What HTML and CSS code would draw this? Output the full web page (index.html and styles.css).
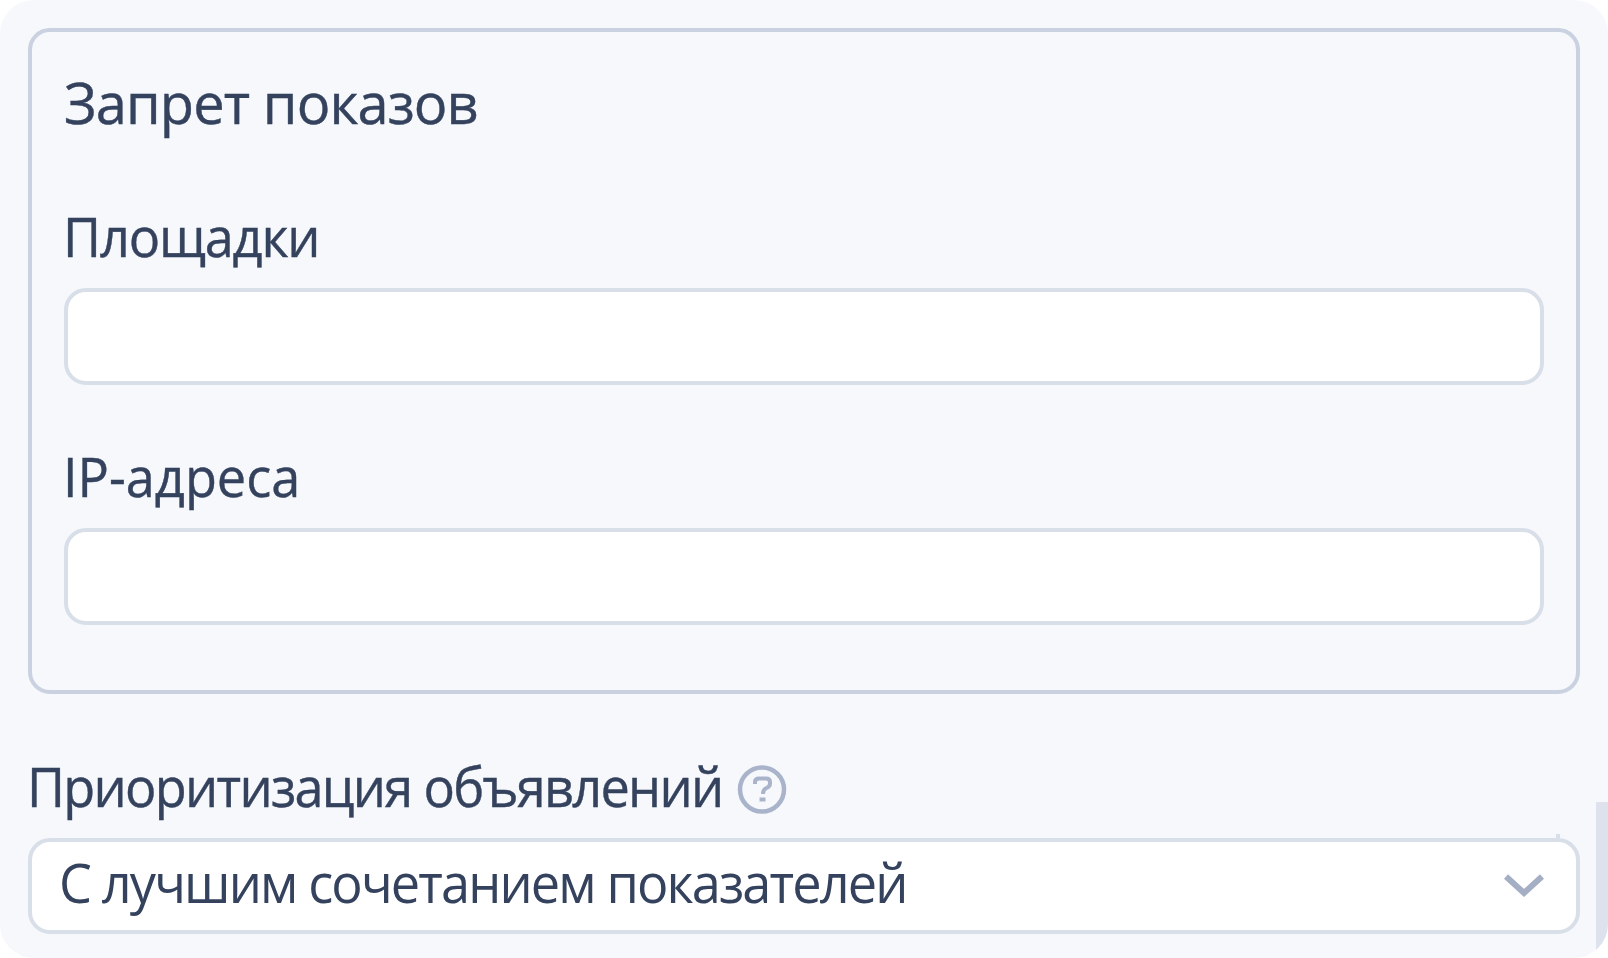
FILE: index.html
```html
<!DOCTYPE html>
<html lang="ru">
<head>
<meta charset="utf-8">
<title>Запрет показов</title>
<link rel="stylesheet" href="styles.css">
</head>
<body>
<main class="panel">
  <section class="card">
    <h1 class="heading"><span class="text text-heading">Запрет показов</span></h1>
    <label class="field field-sites"><span class="text text-narrow text-sites">Площадки</span><input class="input" type="text"></label>
    <label class="field field-ip"><span class="text text-narrow text-ip">IP-адреса</span><input class="input" type="text"></label>
  </section>
  <section class="priority">
    <div class="priority-label">
      <span class="text text-narrow text-priority">Приоритизация объявлений</span>
      <svg class="help" viewBox="0 0 50 50" fill="none" stroke="#a9b4ca"><circle cx="25" cy="25.500" r="22" stroke-width="4.500"/><path d="M18 20v-2q0-3.500 4-3.500h7q4 0 4 3.500v1.500q0 3-3.500 4.500t-3.500 6M22.500 35.500h6" stroke-width="4"/></svg>
    </div>
    <div class="select">
      <span class="text text-narrow text-value">С лучшим сочетанием показателей</span>
      <svg class="chevron" viewBox="0 0 40 24" fill="none" stroke="#a4afc5" stroke-width="6"><path d="M2 2.500 20 19 38 2.500"/></svg>
      <i class="tick"></i>
    </div>
  </section>
  <i class="scrollbar"></i>
</main>
</body>
</html>
```
FILE: styles.css
```css
* { box-sizing: border-box; }
body { margin: 0; background: #fff; }
.panel {
  position: relative;
  width: 1608px;
  height: 958px;
  padding: 28px;
  overflow: hidden;
  border-radius: 34px;
  background: #f6f8fc;
  color: #34425d;
  font: 400 55px/64px "Open Sans", "Noto Sans", sans-serif;
}
.card {
  height: 666px;
  padding: 38px 32px 0;
  border: 4px solid #cad1e0;
  border-radius: 22px;
}
.heading { height: 134px; margin: 0; font: inherit; }
.text { display: block; white-space: nowrap; -webkit-text-stroke: 0.4px; }
.text-heading { font-size: 56px; letter-spacing: -0.9px; }
.text-narrow {
  letter-spacing: -1.87px;
  transform: translateX(-1px) scaleX(0.95);
  transform-origin: left;
}
.text-sites { letter-spacing: -1.2px; }
.text-ip { letter-spacing: 0; }
.field { display: flex; flex-direction: column; }
.field-sites { height: 240px; }
.input, .select {
  border: 4px solid #d9dfe9;
  border-radius: 22px;
  background: #fff;
}
.input { width: 100%; height: 97px; margin: 20px 0 0; padding: 0 24px; font: inherit; }
.priority { padding-top: 60px; }
.priority-label { display: flex; }
.text-priority { width: 709px; letter-spacing: -1.8px; }
.help { width: 50px; height: 50px; margin-top: 10px; }
.select {
  position: relative;
  display: flex;
  align-items: center;
  justify-content: space-between;
  height: 96px;
  margin-top: 20px;
  padding: 0 32px 0 28px;
}
.text-value { padding-bottom: 8px; letter-spacing: -1.95px; -webkit-text-stroke: 0; }
.chevron { width: 40px; height: 24px; }
.tick { position: absolute; top: -8px; right: 16px; width: 4px; height: 4px; background: #d9dfe9; }
.scrollbar { position: absolute; right: 0; bottom: 0; width: 12px; height: 156px; background: #dde2ec; }
```
